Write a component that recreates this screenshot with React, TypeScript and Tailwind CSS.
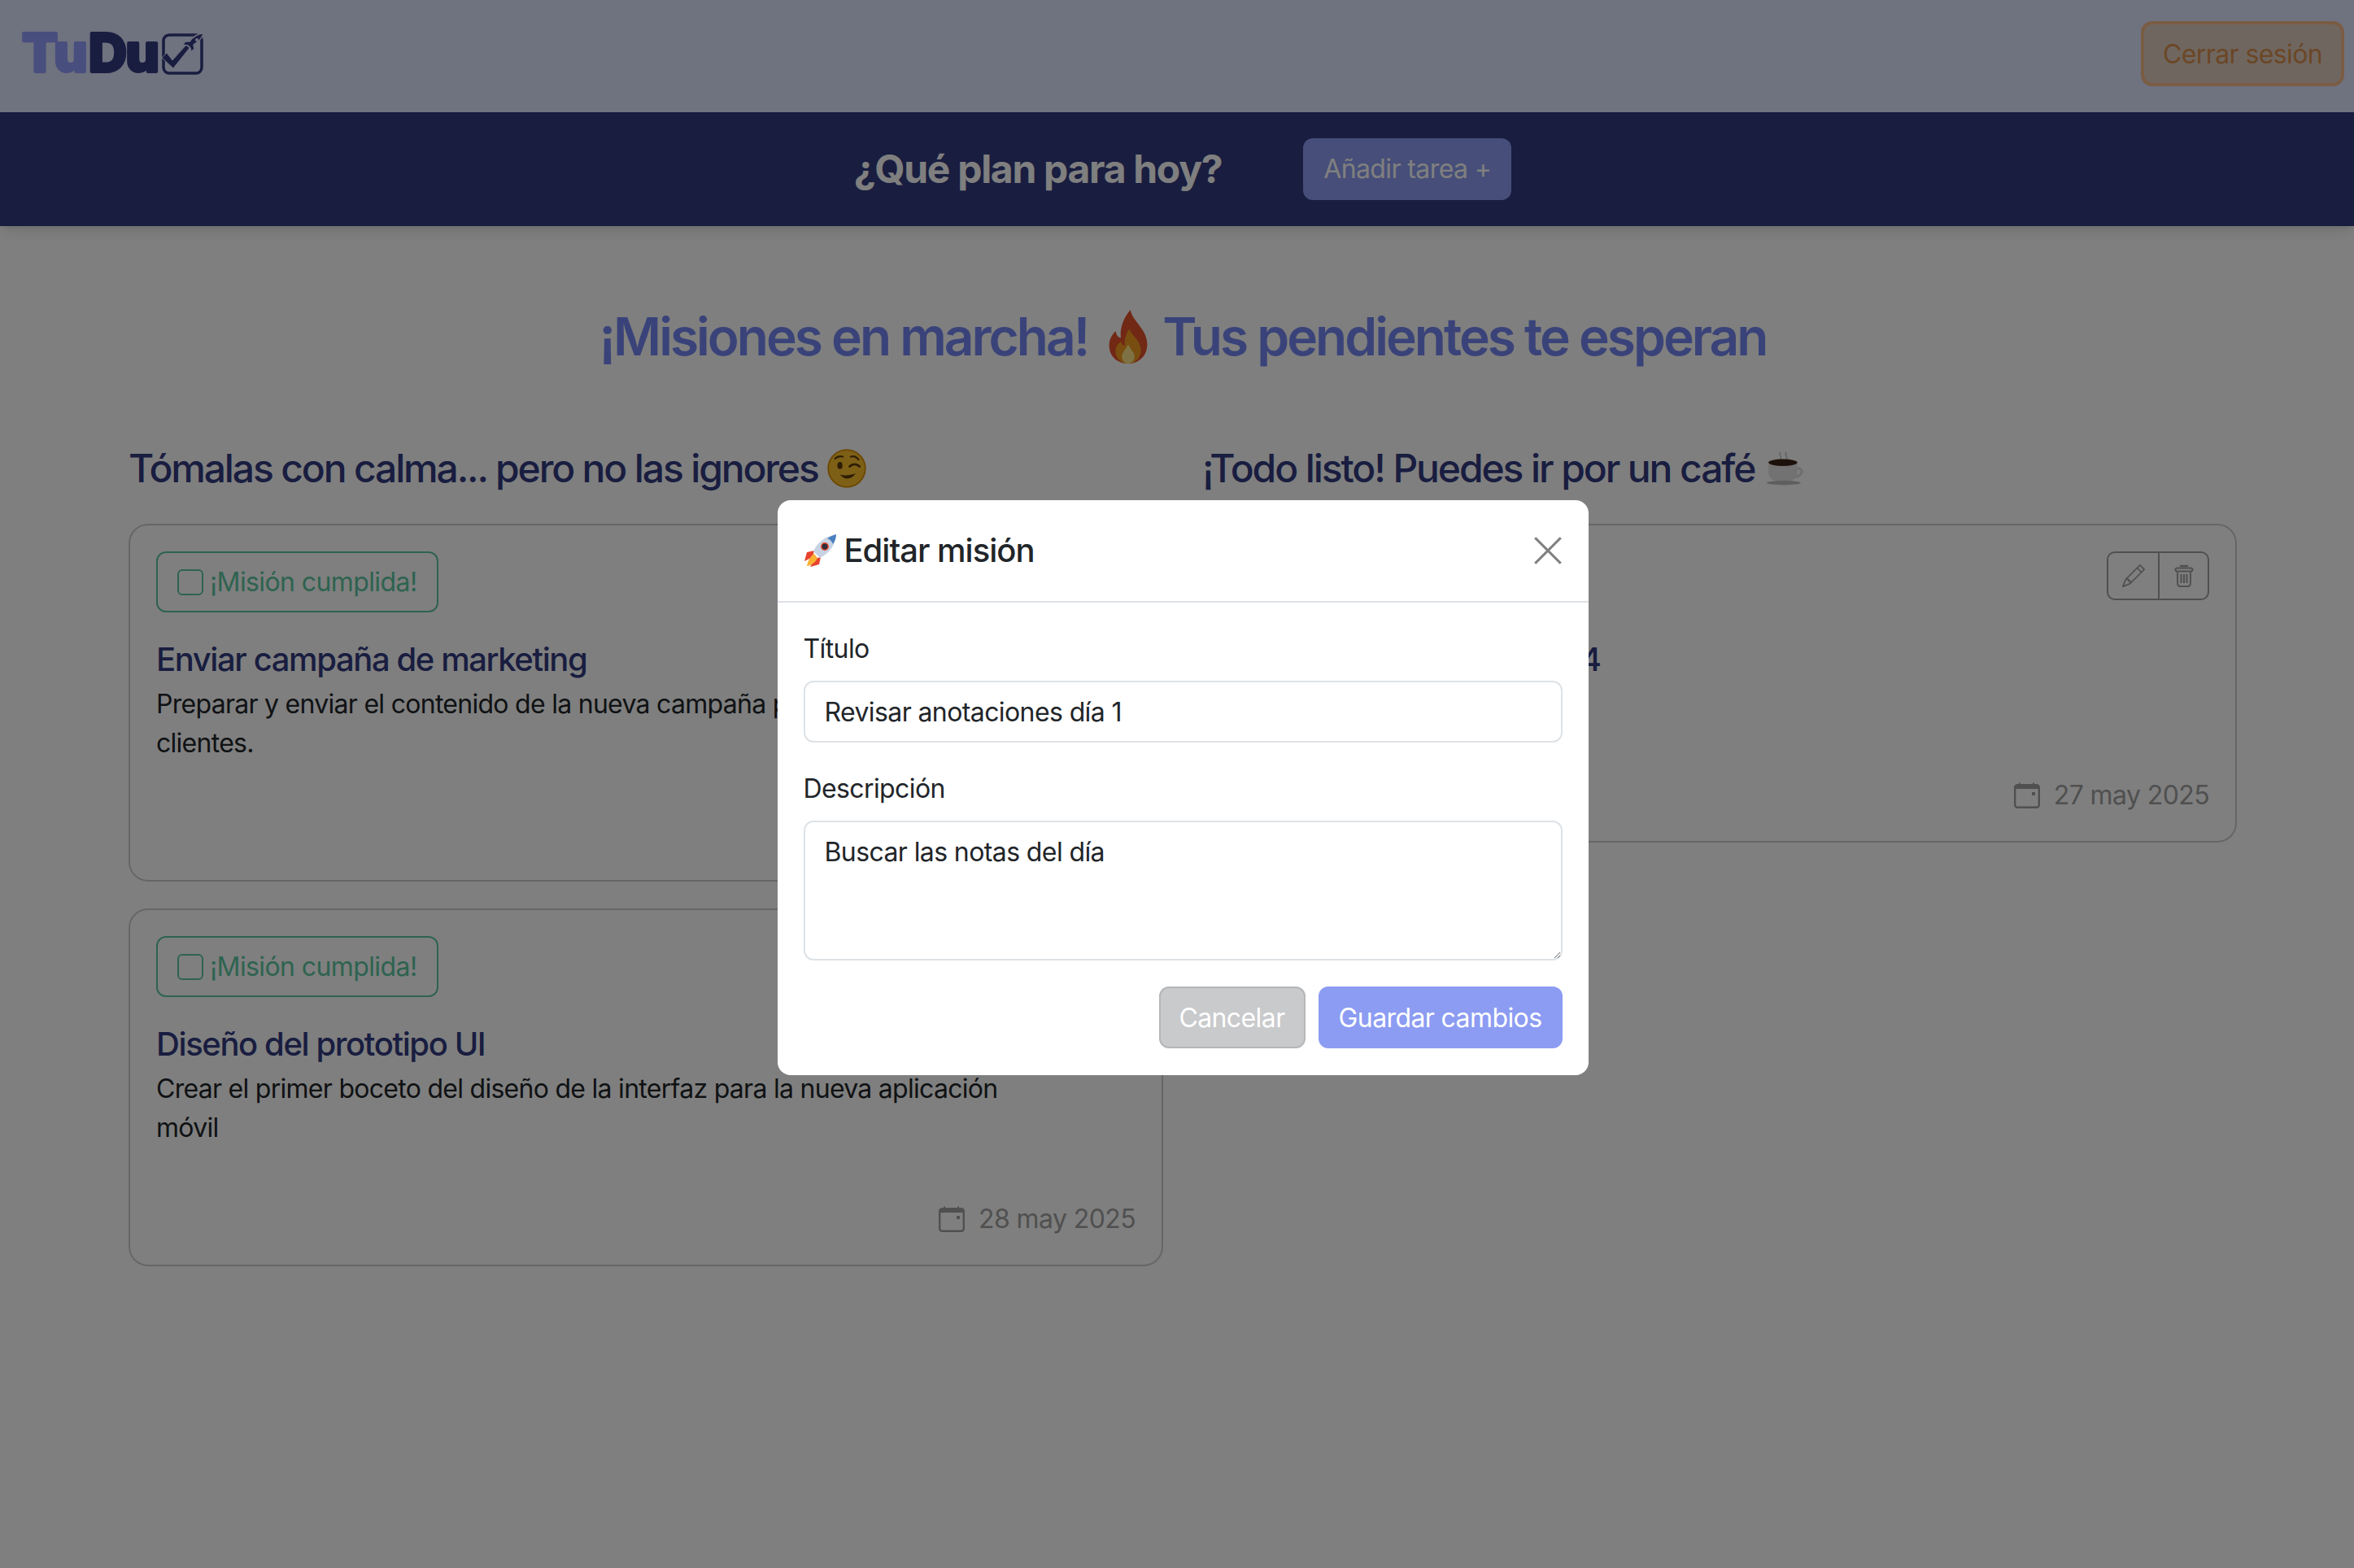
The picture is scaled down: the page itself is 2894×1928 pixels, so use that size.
import React from 'react';
import { BsPencil } from 'react-icons/bs';

const font = { fontFamily: 'Inter, "Liberation Sans", sans-serif' };

function Rocket({ className }: { className?: string }) {
  return (
    <svg viewBox="0 0 40 40" className={className}>
      <path d="M12 20 L3 22 L0 33 L10 28 Z" fill="#e8432e" />
      <path d="M20 28 L18 37 L7 40 L12 30 Z" fill="#e8432e" />
      <path d="M12 24 C7 27 4 33 3 39 C9 38 14 34 16 29 Z" fill="#f9b233" />
      <path d="M11 21 C15 11 24 3 39 0 C38 15 29 24 19 29 Z" fill="#c7d3e3" />
      <path d="M39 0 C35 1 31 3 28 5 C31 6 34 9 35 12 C37 9 39 5 39 0 Z" fill="#4a7fc1" />
      <circle cx="25" cy="15" r="4.2" fill="#2b2f3a" stroke="#e8432e" strokeWidth="1.5" />
    </svg>
  );
}

function Flame({ className }: { className?: string }) {
  return (
    <svg viewBox="0 0 40 56" preserveAspectRatio="none" className={className}>
      <path d="M22 0 C24 12 38 20 38 36 C38 48 30 56 20 56 C9 56 2 48 2 37 C2 30 5 26 8 22 C9 27 11 29 13 29 C12 18 16 8 22 0 Z" fill="#e2512a" />
      <path d="M21 20 C24 28 32 32 32 42 C32 50 27 56 20 56 C13 56 8 50 8 43 C8 38 11 35 13 33 C14 36 15 37 17 37 C16 31 18 25 21 20 Z" fill="#f39a1f" />
      <path d="M20 36 C22 41 26 44 26 49 C26 53 23 56 20 56 C17 56 14 53 14 49 C14 44 18 41 20 36 Z" fill="#fde48a" />
    </svg>
  );
}

function Wink({ className }: { className?: string }) {
  return (
    <svg viewBox="0 0 40 40" className={className}>
      <circle cx="20" cy="20" r="19" fill="#fbc02d" stroke="#d98e04" strokeWidth="1.5" />
      <ellipse cx="13" cy="17" rx="2.6" ry="3.6" fill="#5b3a0b" />
      <path d="M23 18 C26 15 30 15 33 18" fill="none" stroke="#5b3a0b" strokeWidth="2.4" strokeLinecap="round" />
      <path d="M8 10 C10 8 13 7 16 8 M24 8 C27 7 30 8 32 11" fill="none" stroke="#5b3a0b" strokeWidth="1.8" strokeLinecap="round" />
      <path d="M13 26 C17 32 25 32 29 25 C24 27 18 28 13 26 Z" fill="#5b3a0b" />
    </svg>
  );
}

function Coffee({ className }: { className?: string }) {
  return (
    <svg viewBox="0 0 48 40" className={className}>
      <path d="M18 1 C15 4 21 6 18 10 M25 1 C22 4 28 6 25 10" fill="none" stroke="#c9c9c9" strokeWidth="1.6" />
      <path d="M36 20 C46 18 46 30 34 30" fill="none" stroke="#dcdcdc" strokeWidth="3" />
      <path d="M4 12 H38 V24 C38 32 32 36 21 36 C10 36 4 32 4 24 Z" fill="#e4e4e4" />
      <ellipse cx="21" cy="13" rx="17" ry="4" fill="#3b2416" />
      <ellipse cx="22" cy="37" rx="20" ry="2.6" fill="#bdbdbd" />
    </svg>
  );
}

function TrashIcon() {
  return (
    <svg viewBox="0 0 24 28" className="w-[24px] h-[28px]" fill="none" stroke="currentColor" strokeWidth="2">
      <path d="M8 2 H16" strokeWidth="2.5" strokeLinecap="round" />
      <rect x="1.5" y="4.5" width="21" height="4" rx="2" />
      <path d="M4 9 V23 C4 25.5 5.5 27 8 27 H16 C18.5 27 20 25.5 20 23 V9" />
      <path d="M8.5 12 V23 M12 12 V23 M15.5 12 V23" />
    </svg>
  );
}

function CalendarIcon() {
  return (
    <svg viewBox="0 0 32 32" className="w-[32px] h-[32px]" fill="none" stroke="currentColor">
      <rect x="1.2" y="3.2" width="29.6" height="27.6" rx="3" strokeWidth="2.4" />
      <path d="M1.5 8 C1.5 5 3 3 5 3 H27 C29 3 30.5 5 30.5 8 Z" fill="currentColor" stroke="none" />
      <path d="M7 0.5 V3 M24 0.5 V3" strokeWidth="2" />
      <rect x="22" y="12" width="4" height="4" fill="currentColor" stroke="none" />
    </svg>
  );
}

function Logo() {
  return (
    <svg viewBox="0 0 228 54" className="w-[228px] h-[54px] overflow-visible">
      <text x="3" y="50" fontFamily="Inter, sans-serif" fontWeight="800" fontSize="65" stroke="#919ffc" fill="#919ffc" strokeWidth="4" strokeLinejoin="round">Tu</text>
      <text x="85" y="50" fontFamily="Inter, sans-serif" fontWeight="800" fontSize="65" stroke="#323a80" fill="#323a80" strokeWidth="4" strokeLinejoin="round" letterSpacing="-1.5">Du</text>
      <rect x="177" y="5" width="47" height="47" rx="7" fill="none" stroke="#323a80" strokeWidth="3.5" />
      <path d="M175 33 L181 27 L188 36 L205 17 L209 21 L189 46 Z" fill="#323a80" stroke="#dfe4ff" strokeWidth="1" />
      <path d="M226 3 C220 3 213 7 209 13 L204 13 L200 17 L207 18 L210 21 L211 26 L215 22 L214 17 C220 13 225 9 226 3 Z" fill="#323a80" stroke="#dfe4ff" strokeWidth="1.5" />
      <circle cx="218" cy="11" r="2" fill="#dfe4ff" />
    </svg>
  );
}

function TaskCard({ title, text, date, lines }: { title: string; text: string; date: string; lines: number }) {
  return (
    <div className="border-2 border-[#cdcdcd] rounded-[24px] px-[32px] pt-[32px] pb-[32px] bg-white">
      <div className="flex items-start justify-between">
        <label className="flex items-center gap-[8px] h-[75px] px-[24px] border-2 border-[#5cc6a0] rounded-[12px] text-[32px] tracking-[-0.6px] text-[#5cc6a0]">
          <span className="w-[32px] h-[32px] border-2 border-[#5cc6a0] rounded-[6px]" />
          ¡Misión cumplida!
        </label>
        <div className="flex h-[60px] border-2 border-[#a0a0a0] rounded-[10px] text-[#a0a0a0]">
          <span className="w-[61px] flex items-center justify-center"><BsPencil size={28} /></span>
          <span className="w-[61px] flex items-center justify-center border-l-2 border-[#a0a0a0]"><TrashIcon /></span>
        </div>
      </div>
      <h3 className="mt-[34px] text-[40px] leading-[48px] font-medium tracking-[-1.4px] text-[#323a80]">{title}</h3>
      <p className={`mt-[7px] max-w-[1100px] text-[32px] leading-[48px] tracking-[-0.72px] text-[#212529] ${lines === 2 ? 'min-h-[96px]' : 'min-h-[48px]'}`}>{text}</p>
      <div className="mt-[64px] h-[48px] flex items-center justify-end gap-[17px] text-[32px] tracking-[-0.6px] text-[#a0a0a0]">
        <CalendarIcon />
        {date}
      </div>
    </div>
  );
}

export default function App() {
  return (
    <div className="relative min-h-screen bg-white overflow-hidden" style={font}>
      <header className="h-[138px] bg-[#dfe4ff] flex items-start justify-between pl-[24px] pr-[12px]">
        <div className="mt-[38px]"><Logo /></div>
        <button className="mt-[26px] w-[250px] h-[80px] pt-[2px] border-4 border-[#f4b888] bg-[#e0ccc0] rounded-[14px] text-[32px] tracking-[-0.6px] text-[#d68e4c]">Cerrar sesión</button>
      </header>
      <div className="h-[140px] bg-[#323a80] flex items-center justify-center gap-[100px] pl-[14px] shadow-lg">
        <h2 className="text-[48px] font-bold tracking-[-1.3px] text-white">¿Qué plan para hoy?</h2>
        <button className="w-[256px] h-[76px] bg-[#8c9cf2] rounded-[12px] text-[32px] tracking-[-0.6px] text-white">Añadir tarea +</button>
      </div>
      <main className="w-[2592px] ml-[158px] pt-[98px]">
        <h1 className="flex items-center justify-center text-[64px] leading-[76px] font-semibold tracking-[-3px] text-[#7486f2]">
          ¡Misiones en marcha!
          <Flame className="ml-[24px] mr-[16px] w-[52px] h-[66px]" />
          Tus pendientes te esperan
        </h1>
        <div className="mt-[94px] grid grid-cols-2 gap-[48px]">
          <div>
            <h2 className="flex items-center gap-[11px] h-[60px] text-[48px] font-medium tracking-[-2.15px] text-[#323a80]">
              Tómalas con calma... pero no las ignores <Wink className="w-[48px] h-[48px]" />
            </h2>
            <div className="mt-[38px] flex flex-col gap-[33px]">
              <TaskCard title="Enviar campaña de marketing" text="Preparar y enviar el contenido de la nueva campaña publicitaria a los clientes." date="30 may 2025" lines={2} />
              <TaskCard title="Diseño del prototipo UI" text="Crear el primer boceto del diseño de la interfaz para la nueva aplicación móvil" date="28 may 2025" lines={2} />
            </div>
          </div>
          <div>
            <h2 className="flex items-center gap-[13px] h-[60px] text-[48px] font-medium tracking-[-2.1px] text-[#323a80]">
              ¡Todo listo! Puedes ir por un café <Coffee className="w-[50px] h-[42px]" />
            </h2>
            <div className="mt-[38px]">
              <TaskCard title="Revisar anotaciones día 4" text="Buscar las notas del día" date="27 may 2025" lines={1} />
            </div>
          </div>
        </div>
      </main>

      <div className="fixed inset-0 bg-black/50 pl-[14px]">
        <div className="mx-auto mt-[615px] w-[997px] bg-white rounded-[16px]">
          <div className="h-[126px] px-[32px] flex items-center justify-between border-b-2 border-[#dee2e6]">
            <h5 className="flex items-center gap-[8px] text-[40px] font-medium tracking-[-1px] text-[#212529]">
              <Rocket className="w-[42px] h-[40px]" /> Editar misión
            </h5>
            <svg viewBox="0 0 16 16" className="w-[36px] h-[36px] text-[#7f7f7f]" fill="none" stroke="currentColor" strokeWidth="1.4"><path d="M1 1 L15 15 M15 1 L1 15" /></svg>
          </div>
          <div className="px-[32px] pt-[33px]">
            <label className="block text-[32px] leading-[48px] tracking-[-0.6px] text-[#212529]">Título</label>
            <input readOnly value="Revisar anotaciones día 1" className="mt-[15px] block w-full h-[76px] px-[24px] border-2 border-[#dee2e6] rounded-[12px] text-[32px] tracking-[-0.6px] text-[#212529]" />
            <label className="mt-[33px] block text-[32px] leading-[48px] tracking-[-0.6px] text-[#212529]">Descripción</label>
            <textarea readOnly value="Buscar las notas del día" className="mt-[15px] block w-full h-[172px] px-[24px] pt-[13px] border-2 border-[#dee2e6] rounded-[12px] text-[32px] leading-[48px] tracking-[-0.6px] text-[#212529]" />
            <div className="mt-[32px] pb-[33px] flex justify-end gap-[16px]">
              <button className="w-[180px] h-[76px] pt-[1px] bg-[#c9cacc] border-2 border-[#b5b6b8] rounded-[12px] text-[32px] tracking-[-0.6px] text-white">Cancelar</button>
              <button className="w-[300px] h-[76px] pt-[1px] bg-[#8c9cf2] rounded-[12px] text-[32px] tracking-[-0.6px] text-white">Guardar cambios</button>
            </div>
          </div>
        </div>
      </div>
    </div>
  );
}
